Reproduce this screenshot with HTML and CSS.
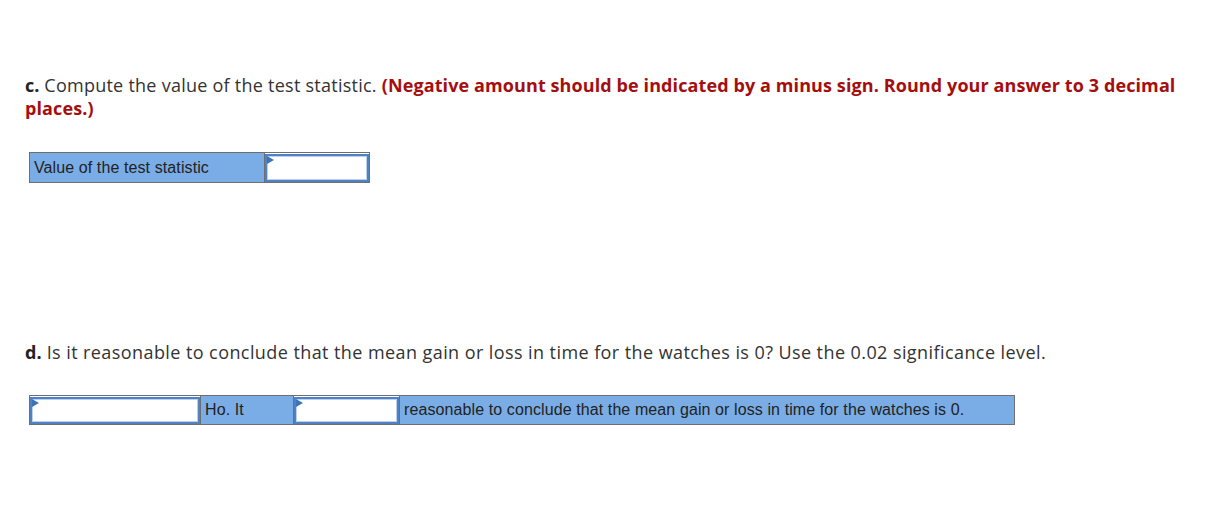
FILE: index.html
```html
<!DOCTYPE html>
<html>
<head>
<meta charset="utf-8">
<link rel="stylesheet" href="styles.css">
</head>
<body>
<div class="page">
  <p class="question"><b class="label">c.</b> Compute the value of the test statistic. <span class="note">(Negative amount should be indicated by a minus sign. Round your answer to 3 decimal places.)</span></p>
  <table class="answer t1">
    <tr>
      <td class="cell-label w235">Value of the test statistic</td>
      <td class="cell-input w105"><div class="inp"></div></td>
    </tr>
  </table>
  <p class="question q2"><b class="label">d.</b> Is it reasonable to conclude that the mean gain or loss in time for the watches is 0? Use the 0.02 significance level.</p>
  <table class="answer t2">
    <tr>
      <td class="cell-input w171"><div class="inp"></div></td>
      <td class="cell-label w93">Ho. It</td>
      <td class="cell-input w106"><div class="inp"></div></td>
      <td class="cell-label w615">reasonable to conclude that the mean gain or loss in time for the watches is 0.</td>
    </tr>
  </table>
</div>
</body>
</html>
```
FILE: styles.css
```css
html, body { margin: 0; padding: 0; background: #fff; }
.page { padding: 74px 25px 0 25px; }
.question {
  margin: 0;
  font-family: "Open Sans", sans-serif;
  font-size: 18px;
  line-height: 23px;
  letter-spacing: 0.25px;
  color: #333;
  width: 1165px;
}
.label { color: #222; font-weight: 700; letter-spacing: 0; }
.note { color: #a50e0e; font-weight: 700; letter-spacing: 0.1px; }
.q2 { margin-top: 158px; letter-spacing: 0.42px; }
.answer {
  border-collapse: collapse;
  margin-left: 4px;
  font-family: "Liberation Sans", Arial, sans-serif;
  font-size: 16px;
  letter-spacing: 0.1px;
  color: #222;
}
.t1 { margin-top: 32px; }
.t2 { margin-top: 31px; }
.answer td {
  border: 1px solid #6e6e6e;
  height: 30px;
  padding: 0;
  box-sizing: border-box;
  vertical-align: middle;
}
.t2 td { height: 29px; }
.cell-label { background: #7aade5; padding-left: 4px !important; }
.cell-input { background: #fff; }
.inp {
  position: relative;
  height: 28px;
  border: 2px solid #4e82c4;
  box-shadow: inset 0 0 0 1px #b9d0ef;
  box-sizing: border-box;
  background: #fff;
}
.t2 .inp { height: 27px; }
.inp::before {
  content: "";
  position: absolute;
  left: 0; top: 0;
  border-left: 7px solid #3b73ba;
  border-top: 4px solid transparent;
  border-bottom: 4px solid transparent;
}
.w235 { width: 235px; }
.w105 { width: 105px; }
.w171 { width: 171px; }
.w93 { width: 93px; }
.w106 { width: 106px; }
.w615 { width: 615px; }
```
